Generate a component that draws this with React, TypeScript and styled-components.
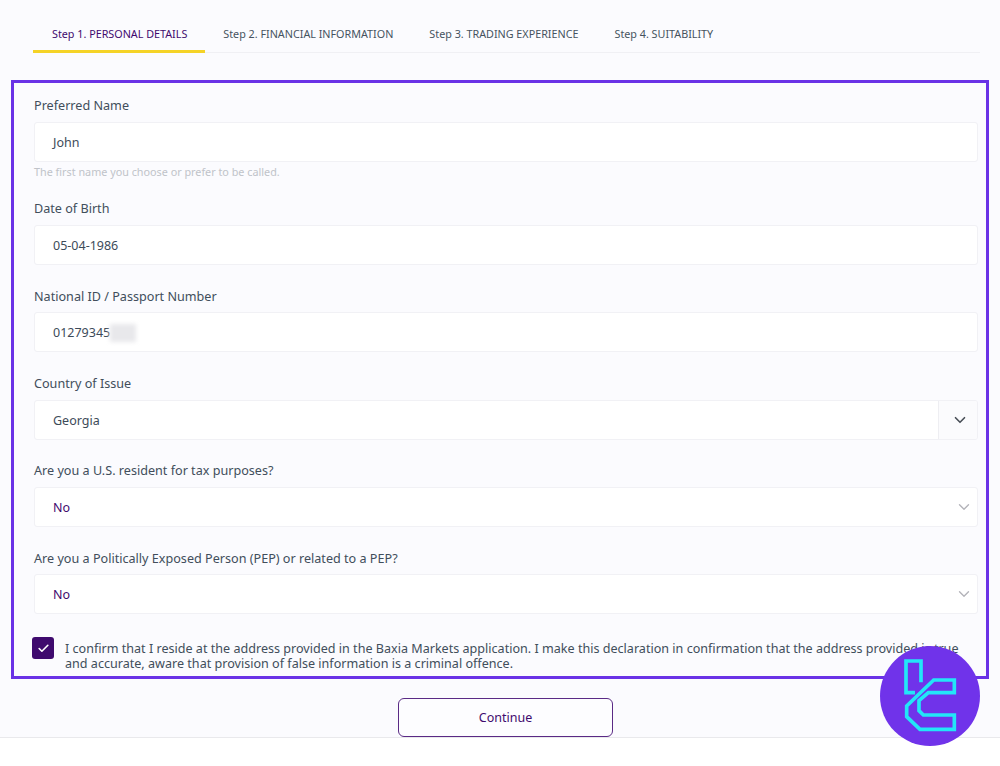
import React from "react";
import styled, { createGlobalStyle } from "styled-components";
import { ChevronDown, Check } from "lucide-react";

const Global = createGlobalStyle`
  html, body { margin: 0; padding: 0; background: #ffffff; }
  body { font-family: "Noto Sans", "Liberation Sans", sans-serif; }
`;

const Screen = styled.div`
  position: relative;
  width: 1000px;
  height: 766px;
  overflow: hidden;
  background: #ffffff;
`;

const Page = styled.div`
  height: 738px;
  box-sizing: border-box;
  background: #fbfbfe;
  border-bottom: 1px solid #e9e9ec;
`;

const Tabs = styled.nav`
  display: flex;
  height: 53px;
  box-sizing: border-box;
  margin: 0 20px 0 33px;
  border-bottom: 1px solid #f0f0f4;
`;

const Tab = styled.div<{ $active?: boolean }>`
  display: flex;
  align-items: center;
  height: 53px;
  box-sizing: border-box;
  padding: 20px 18px 3px ${(p) => (p.$active ? 19 : 18)}px;
  font-size: 10.77px;
  white-space: nowrap;
  color: ${(p) => (p.$active ? "#3f0a6e" : "#46535f")};
  border-bottom: 3px solid ${(p) => (p.$active ? "#f5d327" : "transparent")};
`;

const Frame = styled.form`
  width: 978px;
  height: 599px;
  box-sizing: border-box;
  margin: 27px 0 0 11px;
  padding: 14.4px 8px 0 20px;
  border: 3px solid #6a32e6;
`;

const Field = styled.div<{ $flush?: boolean }>`
  margin-bottom: ${(p) => (p.$flush ? 0 : 22.83)}px;
`;

const Label = styled.div`
  height: 17px;
  margin-bottom: 7.5px;
  font-size: 12.62px;
  line-height: 17px;
  color: #414e5b;
`;

const Control = styled.div`
  display: flex;
  align-items: center;
  justify-content: space-between;
  height: 40px;
  box-sizing: border-box;
  background: #ffffff;
  border: 1px solid #f1f1f5;
  border-radius: 3px;
  overflow: hidden;
`;

const Value = styled.span<{ $accent?: boolean }>`
  display: flex;
  align-items: center;
  padding: 1px 0 0 18px;
  font-size: 12.5px;
  color: ${(p) => (p.$accent ? "#3f0a6e" : "#3d4b59")};
`;

const Blur = styled.span`
  display: inline-block;
  width: 26px;
  height: 18px;
  background: #e8e8eb;
  filter: blur(2px);
`;

const Addon = styled.span`
  display: flex;
  align-items: center;
  justify-content: center;
  width: 39px;
  height: 100%;
  padding-left: 3px;
  box-sizing: border-box;
  background: #fbfbfd;
  border-left: 1px solid #eeeef2;
  color: #4a5058;
`;

const PlainArrow = styled.span`
  display: flex;
  padding-right: 4px;
  color: #b4b4ba;
`;

const Hint = styled.div`
  height: 16px;
  margin: 2px 0 20.6px;
  font-size: 10.8px;
  line-height: 16px;
  color: #c0c3c9;
`;

const Confirm = styled.label`
  display: flex;
  align-items: flex-start;
  gap: 11px;
  margin: 0 0 0 -2px;
  font-size: 12.58px;
  line-height: 15px;
  color: #414e5b;
`;

const Box = styled.span`
  display: flex;
  flex: none;
  align-items: center;
  justify-content: center;
  width: 22px;
  height: 22px;
  border-radius: 3px;
  background: #3f0a6e;
  color: #ffffff;
`;

const ConfirmText = styled.span`
  width: 900px;
  padding-top: 4px;
`;

const Actions = styled.div`
  display: flex;
  margin: 19px 0 0 398px;
`;

const Continue = styled.button`
  width: 215px;
  height: 39px;
  box-sizing: border-box;
  background: #fdfdff;
  border: 1.5px solid #5a2a85;
  border-radius: 6px;
  font-family: inherit;
  font-size: 12.5px;
  color: #3f0a6e;
`;

const Badge = styled.svg`
  position: absolute;
  left: 880px;
  top: 646px;
  width: 100px;
  height: 100px;
`;

const tabs = [
  "Step 1. PERSONAL DETAILS",
  "Step 2. FINANCIAL INFORMATION",
  "Step 3. TRADING EXPERIENCE",
  "Step 4. SUITABILITY",
];

const Logo = () => (
  <Badge viewBox="-45 -12 300 300" aria-hidden="true">
    <circle cx="105" cy="138" r="150" fill="#7033ea" />
    <g fill="none" stroke="#22e6f8" strokeWidth="11" strokeLinejoin="miter">
      <path d="M60 128H33V33H78V97" />
      <path d="M116 90H178V128H100L72 152V182L85 195H178V238H75L35 200V168Z" />
    </g>
  </Badge>
);

export default function App() {
  return (
    <Screen>
      <Global />
      <Page>
        <Tabs>
          {tabs.map((t, i) => (
            <Tab key={t} $active={i === 0}>{t}</Tab>
          ))}
        </Tabs>
        <Frame>
          <Field $flush>
            <Label>Preferred Name</Label>
            <Control><Value>John</Value></Control>
            <Hint>The first name you choose or prefer to be called.</Hint>
          </Field>
          <Field>
            <Label>Date of Birth</Label>
            <Control><Value>05-04-1986</Value></Control>
          </Field>
          <Field>
            <Label>National ID / Passport Number</Label>
            <Control><Value>01279345<Blur /></Value></Control>
          </Field>
          <Field>
            <Label>Country of Issue</Label>
            <Control>
              <Value>Georgia</Value>
              <Addon><ChevronDown size={18} strokeWidth={2.2} /></Addon>
            </Control>
          </Field>
          <Field>
            <Label>Are you a U.S. resident for tax purposes?</Label>
            <Control>
              <Value $accent>No</Value>
              <PlainArrow><ChevronDown size={18} strokeWidth={1.8} /></PlainArrow>
            </Control>
          </Field>
          <Field>
            <Label>Are you a Politically Exposed Person (PEP) or related to a PEP?</Label>
            <Control>
              <Value $accent>No</Value>
              <PlainArrow><ChevronDown size={18} strokeWidth={1.8} /></PlainArrow>
            </Control>
          </Field>
          <Confirm>
            <Box><Check size={13} strokeWidth={3} /></Box>
            <ConfirmText>
              I confirm that I reside at the address provided in the Baxia Markets application. I make this declaration in confirmation that the address provided is true and accurate, aware that provision of false information is a criminal offence.
            </ConfirmText>
          </Confirm>
        </Frame>
        <Actions>
          <Continue type="button">Continue</Continue>
        </Actions>
      </Page>
      <Logo />
    </Screen>
  );
}
